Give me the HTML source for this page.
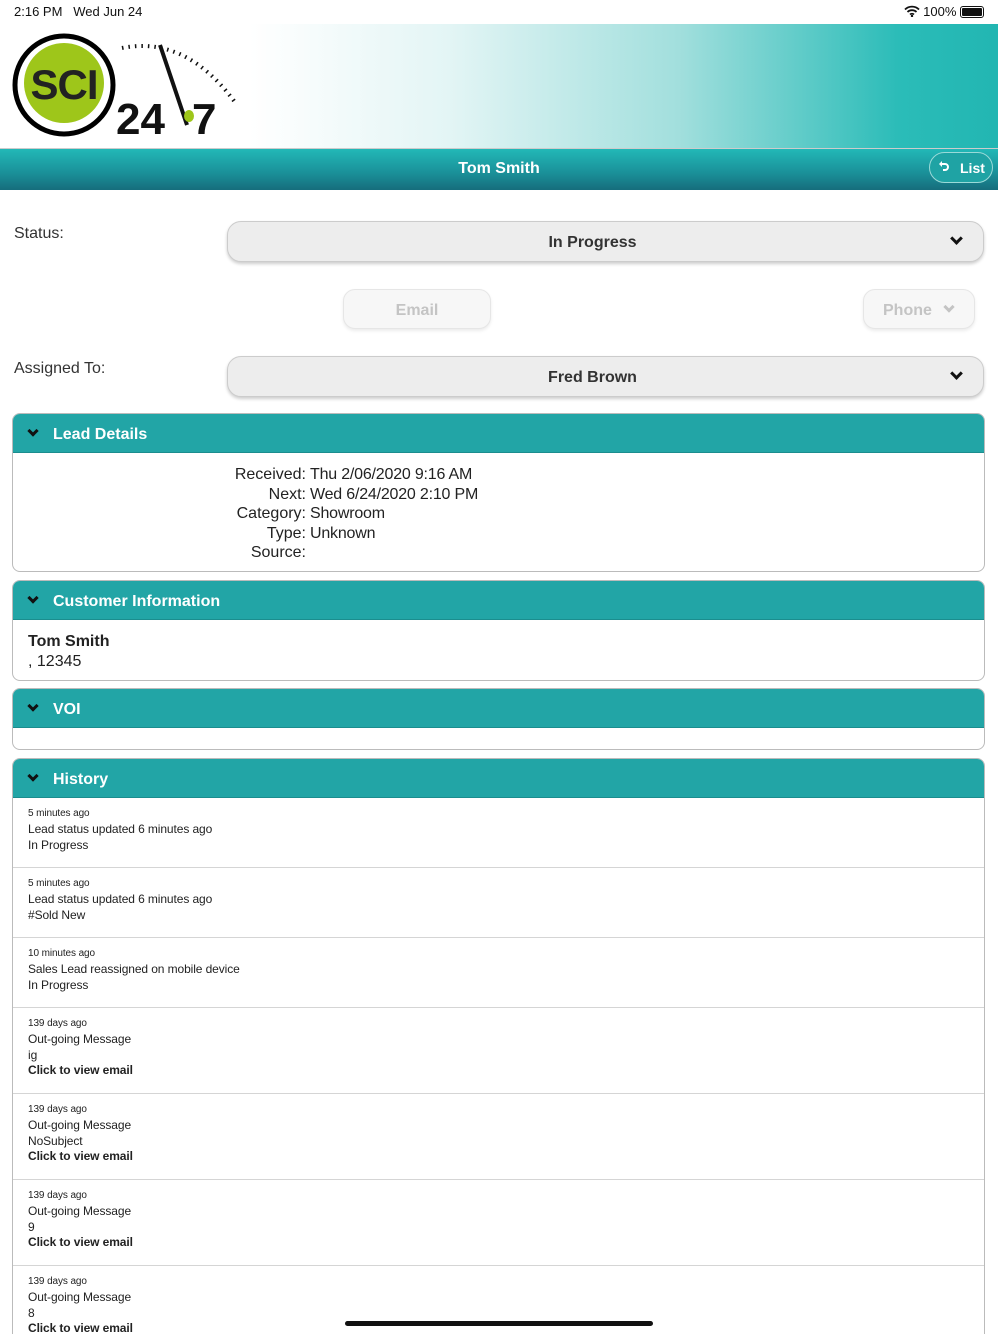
<!DOCTYPE html>
<html style="width:1000px;height:1334px;overflow:hidden"><head><meta charset="utf-8"><style>
*{margin:0;padding:0;box-sizing:border-box}
body{width:1000px;height:1334px;overflow:hidden;background:#fff;font-family:"Liberation Sans",Arial,sans-serif;color:#222;position:relative}
.abs{position:absolute}
.sel{position:absolute;left:227px;width:757px;height:41px;border:1px solid #ccc;border-radius:14px;background:#ededed;box-shadow:0 2px 3px rgba(0,0,0,.2);font-weight:bold;font-size:16px;color:#333;text-align:center;line-height:42px;padding-right:26px}
.chev{position:absolute;width:9px;height:9px;border-right:3px solid #111;border-bottom:3px solid #111;transform:rotate(45deg)}
.sec{position:absolute;left:12px;width:973px;border:1px solid #bbb;border-radius:8px;overflow:hidden;background:#fff}
.sh{height:39px;background:#22a5a6;color:#fff;font-weight:bold;font-size:16px;line-height:42px;padding-left:40px;position:relative;border-bottom:1px solid #1b8d8e}
.sh .chev{left:16px;top:13px;border-color:#111;width:8px;height:8px}
.row{border-bottom:1px solid #d5d5d5;padding:9px 0 0 15px;font-size:12px;line-height:15.6px;color:#222;letter-spacing:-0.1px}
.row small{font-size:10px;display:block;line-height:14px;margin-bottom:1px}
.row b{font-weight:bold}
</style></head><body>
<div class="abs" style="left:14px;top:4px;font-size:13px;color:#111">2:16 PM&nbsp;&nbsp;&nbsp;Wed Jun 24</div>
<div class="abs" style="right:16px;top:4px;font-size:13px;color:#111">
<svg width="16" height="12" viewBox="0 0 16 12" style="vertical-align:-1px"><path d="M1 4.5a10 10 0 0 1 14 0M3.5 7a6.5 6.5 0 0 1 9 0M6 9.5a3 3 0 0 1 4 0" stroke="#111" stroke-width="1.8" fill="none"/><circle cx="8" cy="11" r="1.2" fill="#111"/></svg> 100% <span style="display:inline-block;width:24px;height:12px;border:1px solid #111;border-radius:3px;vertical-align:-2px;padding:1px"><span style="display:block;width:100%;height:100%;background:#111;border-radius:1px"></span></span></div>
<div class="abs" style="left:0;top:24px;width:998px;height:124px;background:linear-gradient(90deg,#fff 0%,#fff 25%,#e3f5f5 45%,#a2dfdd 68%,#2bbcb8 90%,#22b6b2 100%)"></div>
<svg class="abs" style="left:12px;top:30px" width="230" height="110" viewBox="0 0 230 110">
<circle cx="52" cy="55" r="49" fill="#fff" stroke="#000" stroke-width="5"/>
<circle cx="52" cy="53" r="40" fill="#9ec61a"/>
<text x="52" y="69" text-anchor="middle" font-family="Liberation Sans" font-weight="bold" font-size="42" fill="#222" letter-spacing="-1">SCI</text>
<path d="M110 18 Q175 5 225 75" fill="none" stroke="#111" stroke-width="4" stroke-dasharray="1.5 5"/>
<path d="M148 15 L175 95" stroke="#111" stroke-width="4"/>
<ellipse cx="177" cy="86" rx="5" ry="6" fill="#9ec61a"/>
<text x="104" y="104" font-family="Liberation Sans" font-weight="bold" font-size="44" fill="#111">24</text>
<text x="180" y="104" font-family="Liberation Sans" font-weight="bold" font-size="44" fill="#111">7</text>
</svg>
<div class="abs" style="left:0;top:148px;width:998px;height:42px;background:linear-gradient(#22b8b7,#1a8f98 60%,#166d7c);border-top:1px solid #ccc;color:#fff;font-weight:bold;font-size:16px;text-align:center;line-height:40px">Tom Smith</div>
<div class="abs" style="left:929px;top:152px;width:64px;height:31px;border:1px solid #9adad8;border-radius:16px;color:#fff;font-weight:bold;font-size:14px;line-height:30px;padding-left:30px;background:#1fa3a4">List</div>
<svg class="abs" style="left:938px;top:160px" width="12" height="13" viewBox="0 0 12 13"><path d="M3 4h4a3 3 0 0 1 0 6H5" fill="none" stroke="#fff" stroke-width="2"/><path d="M1 4l3-3v6z" fill="#fff"/></svg>
<div class="abs" style="left:14px;top:225px;font-size:16px;color:#333">Status:</div>
<div class="sel" style="top:221px">In Progress<span class="chev" style="right:22px;top:12px"></span></div>
<div class="abs" style="left:343px;top:289px;width:148px;height:40px;border:1px solid #e6e6e6;border-radius:12px;background:#f7f7f7;box-shadow:0 2px 3px rgba(0,0,0,.08);color:#c4c4c4;font-weight:bold;font-size:16px;text-align:center;line-height:42px">Email</div>
<div class="abs" style="left:863px;top:289px;width:112px;height:40px;border:1px solid #e6e6e6;border-radius:12px;background:#f7f7f7;box-shadow:0 2px 3px rgba(0,0,0,.08);color:#c4c4c4;font-weight:bold;font-size:16px;line-height:42px;padding-left:19px">Phone<span class="chev" style="right:21px;top:13px;border-color:#c4c4c4;width:8px;height:8px"></span></div>
<div class="abs" style="left:14px;top:360px;font-size:16px;color:#333">Assigned To:</div>
<div class="sel" style="top:356px">Fred Brown<span class="chev" style="right:22px;top:12px"></span></div>

<div class="sec" style="top:413px;height:159px"><div class="sh"><span class="chev"></span>Lead Details</div>
<div style="position:relative;font-size:16px;line-height:19.6px;color:#222">
<div style="position:absolute;left:0;width:293px;text-align:right;top:12px">Received:<br>Next:<br>Category:<br>Type:<br>Source:</div>
<div style="position:absolute;left:297px;top:12px;letter-spacing:-0.2px">Thu 2/06/2020 9:16 AM<br>Wed 6/24/2020 2:10 PM<br>Showroom<br>Unknown</div></div></div>

<div class="sec" style="top:580px;height:101px"><div class="sh"><span class="chev"></span>Customer Information</div>
<div style="padding:12px 0 0 15px;font-size:16px;line-height:20px"><b>Tom Smith</b><br>, 12345</div></div>

<div class="sec" style="top:688px;height:62px"><div class="sh"><span class="chev"></span>VOI</div></div>

<div class="sec" style="top:758px;height:580px;border-radius:8px 8px 0 0"><div class="sh"><span class="chev"></span>History</div>
<div class="row" style="height:70px"><small>5 minutes ago</small>Lead status updated 6 minutes ago<br>In Progress</div>
<div class="row" style="height:70px"><small>5 minutes ago</small>Lead status updated 6 minutes ago<br>#Sold New</div>
<div class="row" style="height:70px"><small>10 minutes ago</small>Sales Lead reassigned on mobile device<br>In Progress</div>
<div class="row" style="height:86px"><small>139 days ago</small>Out-going Message<br>ig<br><b>Click to view email</b></div>
<div class="row" style="height:86px"><small>139 days ago</small>Out-going Message<br>NoSubject<br><b>Click to view email</b></div>
<div class="row" style="height:86px"><small>139 days ago</small>Out-going Message<br>9<br><b>Click to view email</b></div>
<div class="row" style="height:86px;border:0"><small>139 days ago</small>Out-going Message<br>8<br><b>Click to view email</b></div>
</div>
<div class="abs" style="left:345px;top:1321px;width:308px;height:5px;border-radius:3px;background:#111"></div>
</body></html>
